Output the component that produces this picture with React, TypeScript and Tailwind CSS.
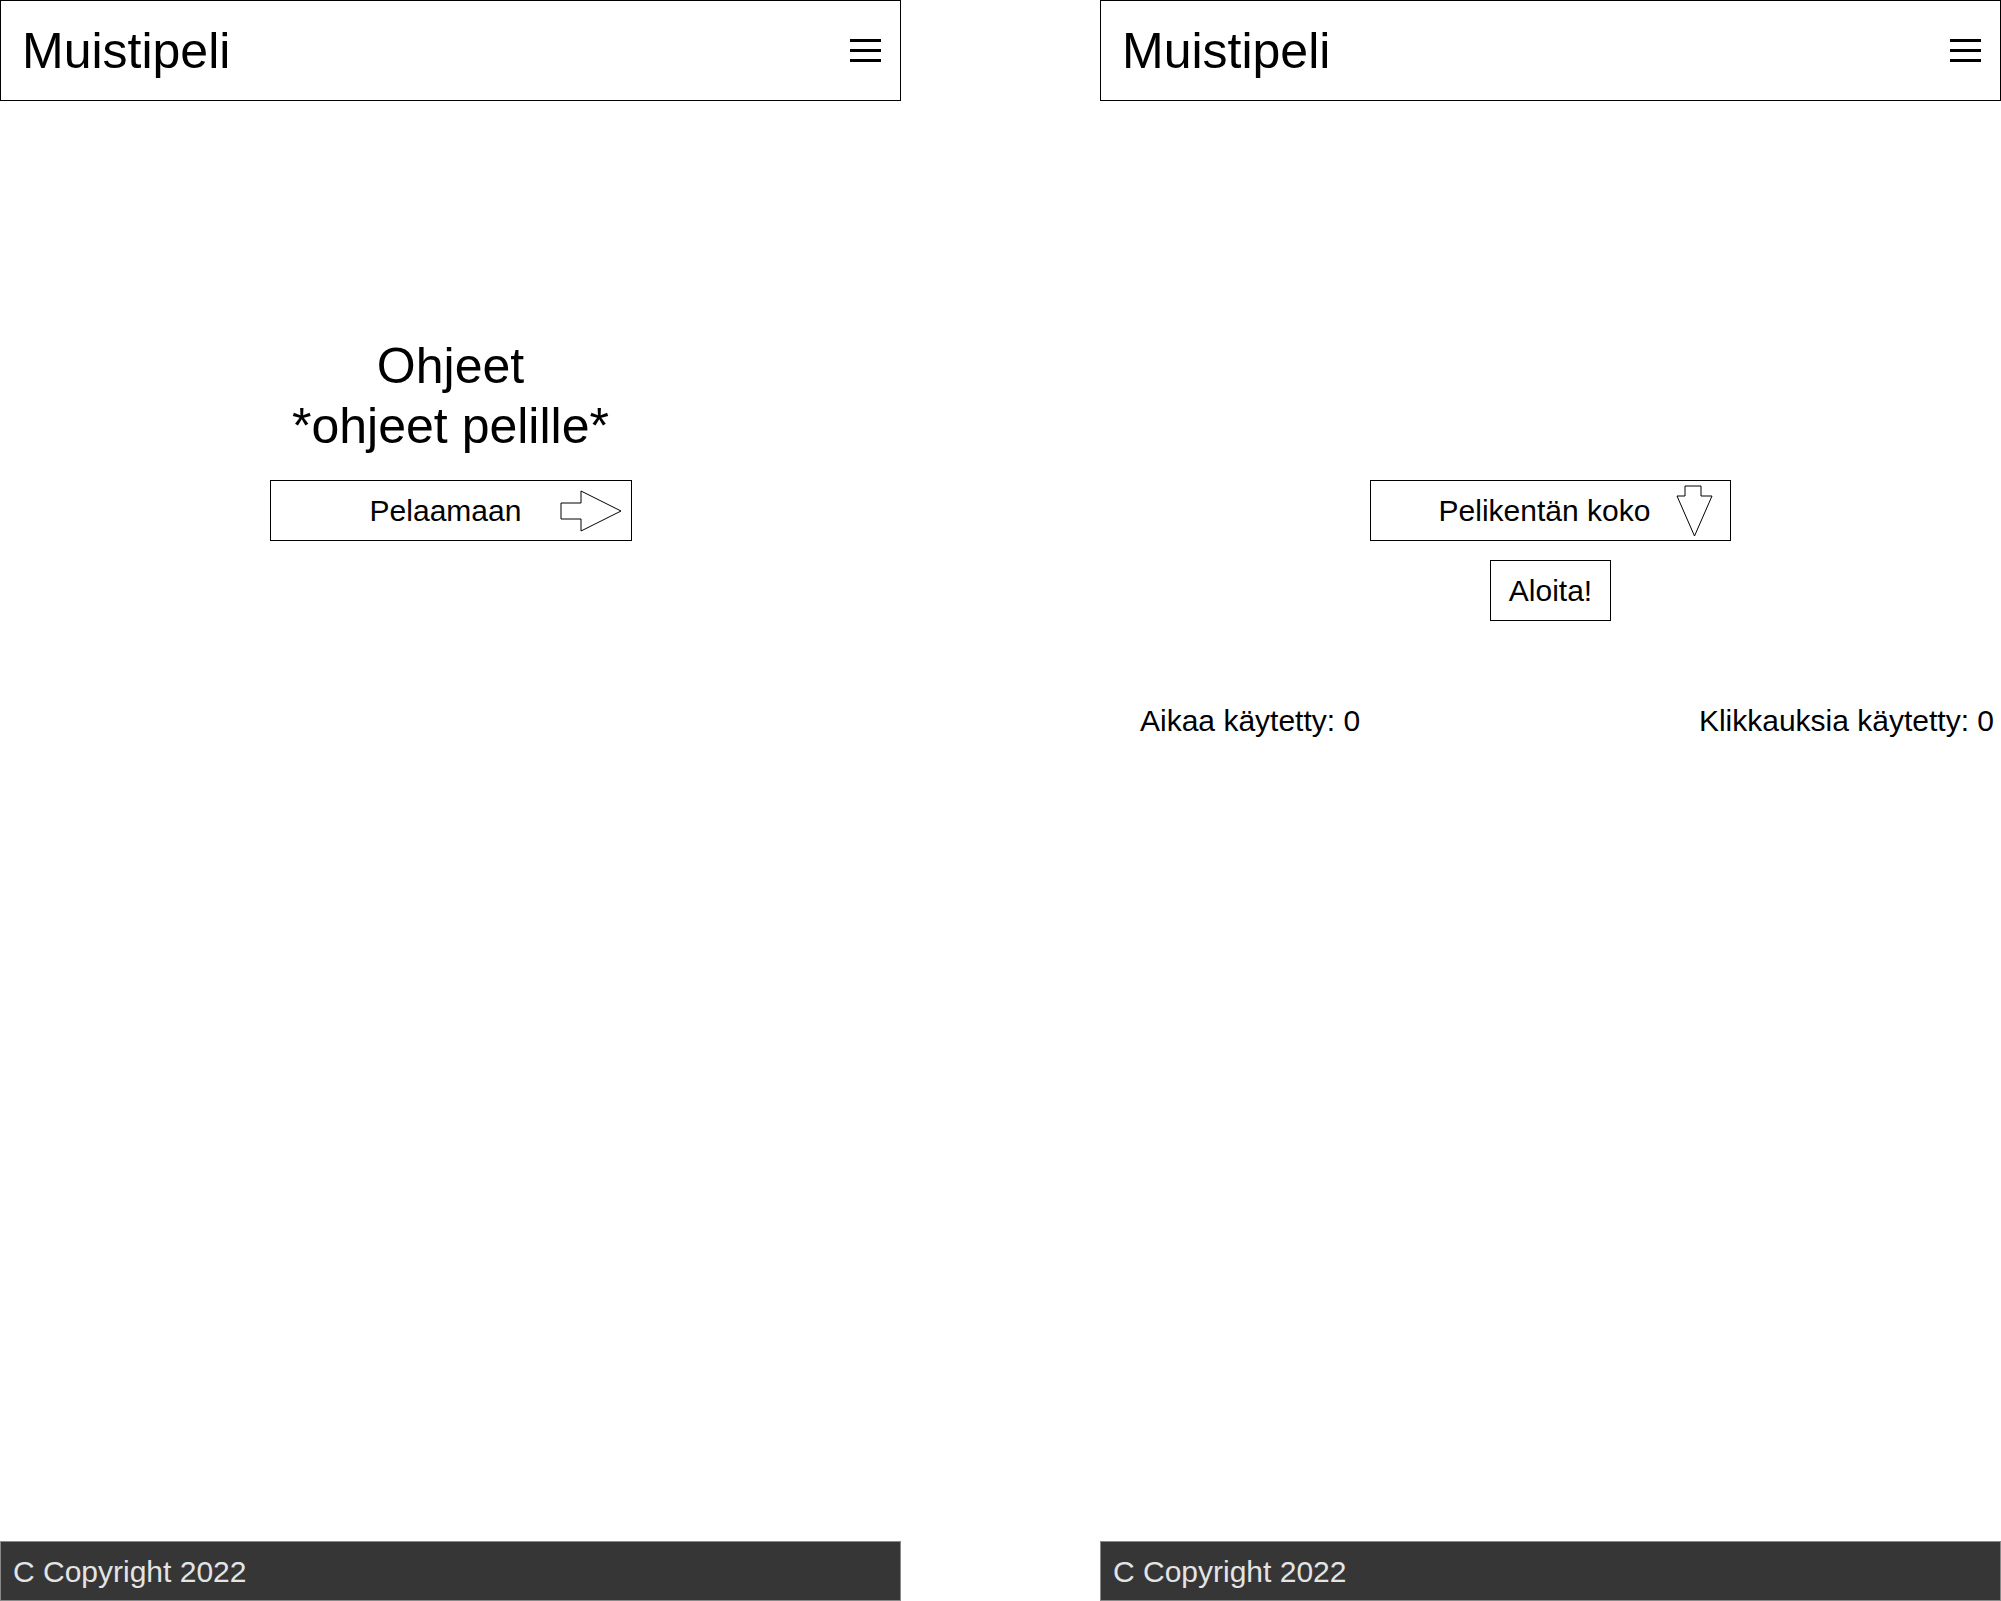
import type { ReactNode } from 'react'

const FONT = "font-['Liberation_Sans',Arial,sans-serif]"

function Header() {
  return (
    <header className="flex h-[101px] shrink-0 items-center justify-between border border-black pl-[21px] pr-[19px]">
      <h1 className="text-[50px] leading-none text-black">Muistipeli</h1>
      {/* hampurilaisvalikko */}
      <div className="flex flex-col gap-[7px]">
        <span className="h-[3px] w-[31px] bg-black" />
        <span className="h-[3px] w-[31px] bg-black" />
        <span className="h-[3px] w-[31px] bg-black" />
      </div>
    </header>
  )
}

function Footer() {
  return (
    <footer className="flex h-[60px] shrink-0 items-center border border-[#8a8a8a] bg-[#363636] pl-[12px] text-[30px] text-[#e4e4e4]">
      C Copyright 2022
    </footer>
  )
}

function Panel({ children }: { children: ReactNode }) {
  return (
    <section className="flex h-full w-[901px] flex-col">
      <Header />
      <main className="flex flex-1 flex-col items-center">{children}</main>
      <Footer />
    </section>
  )
}

function ArrowRight() {
  return (
    <svg width="62" height="42" viewBox="-1 -1 62 42" className="absolute right-[9px] top-[9px]">
      <path d="M0 12 H20 V0 L60 20 L20 40 V28 H0 Z" fill="white" stroke="black" strokeWidth="1" />
    </svg>
  )
}

function ArrowDown() {
  return (
    <svg width="37" height="52" viewBox="-1 -1 37 52" className="absolute right-[17px] top-[4px]">
      <path d="M8 0 H24 V10 H35 L17.5 50 L0 10 H8 Z" fill="white" stroke="black" strokeWidth="1" />
    </svg>
  )
}

export default function App() {
  return (
    <div className={`flex h-[1601px] w-[2001px] gap-[199px] bg-white text-black ${FONT}`}>
      {/* Ohjeet-näkymä */}
      <Panel>
        <div className="mt-[235px] text-center text-[50px] leading-[60px]">
          <p>Ohjeet</p>
          <p>*ohjeet pelille*</p>
        </div>
        <button
          type="button"
          className="relative mt-[24px] flex h-[61px] w-[362px] items-center justify-center border border-black pr-[10px] text-[30px]"
        >
          Pelaamaan
          <ArrowRight />
        </button>
      </Panel>

      {/* Pelinäkymä */}
      <Panel>
        <button
          type="button"
          className="relative mt-[379px] flex h-[61px] w-[361px] items-center justify-center border border-black pr-[12px] text-[30px]"
        >
          Pelikentän koko
          <ArrowDown />
        </button>
        <button
          type="button"
          className="mt-[19px] flex h-[61px] w-[121px] items-center justify-center border border-black text-[30px]"
        >
          Aloita!
        </button>
        <div className="mt-[82px] flex w-full justify-between pl-[40px] pr-[7px] text-[30px] leading-[36px]">
          <span>Aikaa käytetty: 0</span>
          <span>Klikkauksia käytetty: 0</span>
        </div>
      </Panel>
    </div>
  )
}
